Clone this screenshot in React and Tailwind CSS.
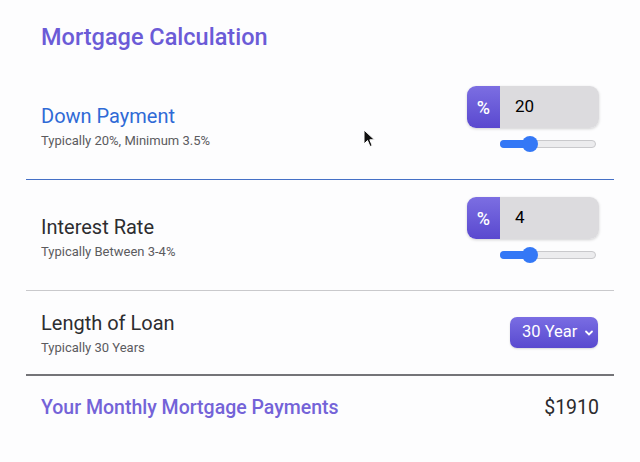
import { useState } from "react";

const Slider = ({ value }) => (
  <div className="relative mr-[3px] mt-[8px] h-[16px] w-[96px]">
    <div className="absolute left-0 right-0 top-[4px] h-[8px] rounded-full border border-[#c9c9cc] bg-[#ececee]" />
    <div
      className="absolute left-0 top-[4px] h-[8px] rounded-full bg-[#3478f6]"
      style={{ width: `${value}px` }}
    />
    <div
      className="absolute top-0 h-[16px] w-[16px] rounded-full bg-[#3478f6]"
      style={{ left: `${value - 8}px` }}
    />
  </div>
);

const PercentInput = ({ value }) => (
  <div className="flex h-[42px] w-[132px] overflow-hidden rounded-[9px] shadow-[0_1px_3px_rgba(0,0,0,0.18)]">
    <div className="flex w-[33px] items-center justify-center bg-gradient-to-b from-[#7c6ee2] to-[#5a48cf] text-[18px] font-medium text-white">
      %
    </div>
    <div className="flex flex-1 items-center bg-[#dcdbde] pl-[15px] text-[17px] text-black">
      {value}
    </div>
  </div>
);

const Cursor = () => (
  <svg
    className="absolute left-[363px] top-[129px]"
    width="13"
    height="19"
    viewBox="0 0 13 19"
  >
    <path
      d="M1 1 L1 15 L4.5 11.5 L7 17.5 L9.2 16.6 L6.8 10.8 L11.5 10.8 Z"
      fill="#111"
      stroke="#fff"
      strokeWidth="1"
      strokeLinejoin="round"
    />
  </svg>
);

const App = () => {
  const [term] = useState("30 Year");

  return (
    <div
      className="relative min-h-[462px] w-[640px] bg-[#fdfdfe] px-[26px]"
      style={{ fontFamily: "Roboto, 'Liberation Sans', sans-serif" }}
    >
      <div className="px-[15px] pt-[22px]">
        <h1 className="text-[23.5px] font-medium leading-[30px] text-[#6b5bd7]">
          Mortgage Calculation
        </h1>
      </div>

      <div className="flex h-[127px] items-start justify-between px-[15px] pt-[34px]">
        <div className="mt-[18px]">
          <h2 className="text-[20px] leading-[24px] text-[#2f6ad6]">Down Payment</h2>
          <p className="mt-[4px] text-[13px] leading-[18px] text-[#5b5b5f]">
            Typically 20%, Minimum 3.5%
          </p>
        </div>
        <div className="flex flex-col items-end">
          <PercentInput value="20" />
          <Slider value={30} />
        </div>
      </div>
      <div className="h-px bg-[#4570c6]" />

      <div className="flex h-[110px] items-start justify-between px-[15px] pt-[17px]">
        <div className="mt-[18px]">
          <h2 className="text-[20px] leading-[24px] text-[#2d2d30]">Interest Rate</h2>
          <p className="mt-[4px] text-[13px] leading-[18px] text-[#5b5b5f]">
            Typically Between 3-4%
          </p>
        </div>
        <div className="flex flex-col items-end">
          <PercentInput value="4" />
          <Slider value={30} />
        </div>
      </div>
      <div className="h-px bg-[#c9c9cc]" />

      <div className="flex h-[83px] items-start justify-between px-[15px] pt-[20px]">
        <div>
          <h2 className="text-[20px] leading-[24px] text-[#2d2d30]">Length of Loan</h2>
          <p className="mt-[4px] text-[13px] leading-[18px] text-[#5b5b5f]">
            Typically 30 Years
          </p>
        </div>
        <div className="mr-px mt-[6px] flex h-[31px] w-[88px] items-center justify-between rounded-[7px] bg-gradient-to-b from-[#7a6de3] to-[#5949cf] pl-[12px] pr-[4px] text-[16.5px] text-white shadow-[0_1px_2px_rgba(0,0,0,0.15)]">
          <span>{term}</span>
          <svg width="10" height="8" viewBox="0 0 10 8">
            <path d="M2 2.5 L5 5.5 L8 2.5" fill="none" stroke="#fff" strokeWidth="1.8" strokeLinecap="round" />
          </svg>
        </div>
      </div>
      <div className="h-[2px] bg-[#747478]" />

      <div className="flex items-center justify-between px-[15px] pt-[20px]">
        <span className="text-[19.5px] font-medium leading-[24px] text-[#7463d8]">
          Your Monthly Mortgage Payments
        </span>
        <span className="text-[19.5px] leading-[24px] text-[#2a2a2d]">$1910</span>
      </div>

      <Cursor />
    </div>
  );
};

export default App;
